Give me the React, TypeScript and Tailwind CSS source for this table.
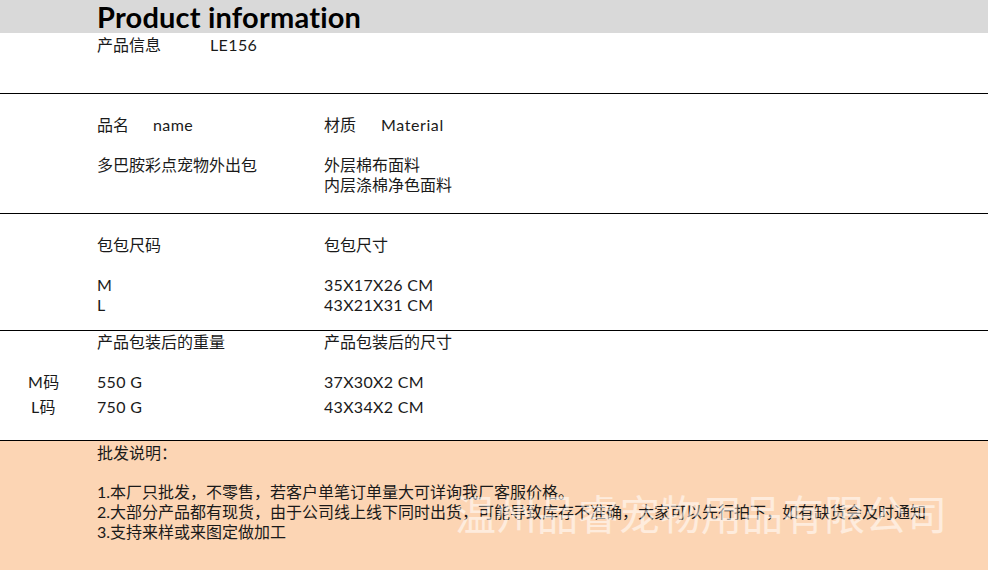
import React from "react";

const font = { fontFamily: "Lato, 'Noto Sans CJK SC', sans-serif" };

const notes = [
    "1.本厂只批发，不零售，若客户单笔订单量大可详询我厂客服价格。",
    "2.大部分产品都有现货，由于公司线上线下同时出货，可能导致库存不准确，大家可以先行拍下，如有缺货会及时通知",
    "3.支持来样或来图定做加工",
];

const App: React.FC = () => {
    return (
        <div className="relative w-[988px] h-[570px] overflow-hidden bg-white text-[16px] leading-[20px] text-[#1a1a1a] font-['Lato','Noto_Sans_CJK_SC',sans-serif]">
            {/* Title + code */}
            <div className="h-[94px] border-b border-black">
                <div className="h-[33px] bg-[#d9d9d9] pl-[97px]">
                    <h1 className="text-[29px] leading-[34px] font-bold text-black tracking-[0.2px]">Product information</h1>
                </div>
                <div className="flex pl-[97px] mt-[2px]">
                    <span className="w-[113px]">产品信息</span>
                    <span className="tracking-[0.4px]">LE156</span>
                </div>
            </div>

            {/* Name / material */}
            <div className="h-[120px] border-b border-black pt-[21px] pl-[97px]">
                <div className="flex">
                    <div className="w-[227px]">
                        <span className="inline-block w-[56px]">品名</span>
                        <span className="tracking-[0.4px]">name</span>
                    </div>
                    <div>
                        <span className="inline-block w-[57px]">材质</span>
                        <span className="tracking-[0.6px]">Material</span>
                    </div>
                </div>
                <div className="flex mt-5">
                    <div className="w-[227px]">多巴胺彩点宠物外出包</div>
                    <div>
                        <div>外层棉布面料</div>
                        <div>内层涤棉净色面料</div>
                    </div>
                </div>
            </div>

            {/* Bag size */}
            <div className="h-[117px] border-b border-black pt-[21px] pl-[97px]">
                <div className="flex">
                    <div className="w-[227px]">包包尺码</div>
                    <div>包包尺寸</div>
                </div>
                <div className="flex mt-5 tracking-[0.3px]">
                    <div className="w-[227px]">
                        <div>M</div>
                        <div>L</div>
                    </div>
                    <div>
                        <div>35X17X26 CM</div>
                        <div>43X21X31 CM</div>
                    </div>
                </div>
            </div>

            {/* Packed weight / size */}
            <div className="h-[110px] border-b border-black pt-px">
                <div className="flex pl-[97px]">
                    <div className="w-[227px]">产品包装后的重量</div>
                    <div>产品包装后的尺寸</div>
                </div>
                <div className="mt-5 flex flex-col gap-[5px] tracking-[0.3px]">
                    <div className="flex">
                        <div className="w-[97px] pl-[28px]">M码</div>
                        <div className="w-[227px]">550 G</div>
                        <div>37X30X2 CM</div>
                    </div>
                    <div className="flex">
                        <div className="w-[97px] pl-[31px]">L码</div>
                        <div className="w-[227px]">750 G</div>
                        <div>43X34X2 CM</div>
                    </div>
                </div>
            </div>

            {/* Wholesale notes */}
            <div className="h-[130px] bg-[#fcd5b4] pt-[2px] pl-[97px]">
                <div>批发说明：</div>
                <div className="mt-[19px]">
                    {notes.map((n) => (
                        <div key={n} className="whitespace-nowrap">{n}</div>
                    ))}
                </div>
            </div>

            {/* Watermark */}
            <div
                className="absolute left-[455px] top-[491px] text-[41px] leading-[48px] text-white/55 whitespace-nowrap pointer-events-none"
                style={font}
            >
                温州品睿宠物用品有限公司
            </div>
        </div>
    );
};

export default App;
